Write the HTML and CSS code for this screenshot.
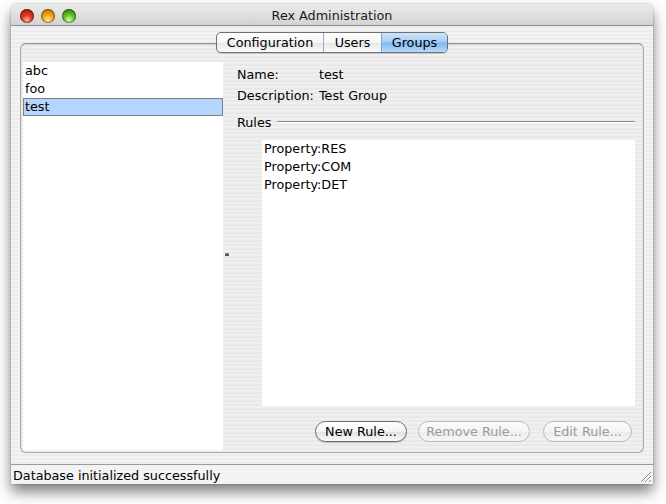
FILE: index.html
```html
<!DOCTYPE html>
<html>
<head>
<meta charset="utf-8">
<link rel="stylesheet" href="styles.css">
</head>
<body>
<div class="window">
  <div class="titlebar">
    <div class="lights">
      <span class="light red"></span>
      <span class="light amber"></span>
      <span class="light green"></span>
    </div>
    <div class="title">Rex Administration</div>
  </div>
  <div class="content">
    <div class="tabs">
      <div class="seg seg-config">Configuration</div>
      <div class="seg seg-users">Users</div>
      <div class="seg seg-groups active">Groups</div>
    </div>
    <div class="pane">
      <div class="groups-list">
        <div class="item">abc</div>
        <div class="item">foo</div>
        <div class="item selected">test</div>
      </div>
      <div class="divider"><span class="grip"></span></div>
      <div class="detail">
        <div class="field"><span class="label">Name:</span><span class="value">test</span></div>
        <div class="field field-desc"><span class="label">Description:</span><span class="value">Test Group</span></div>
        <div class="rules-head"><span>Rules</span><span class="rule-line"></span></div>
        <div class="rules-list">
          <div class="rule">Property:RES</div>
          <div class="rule">Property:COM</div>
          <div class="rule">Property:DET</div>
        </div>
        <div class="buttons">
          <button class="btn btn-default">New Rule...</button>
          <button class="btn btn-disabled btn-remove">Remove Rule...</button>
          <button class="btn btn-disabled btn-edit">Edit Rule...</button>
        </div>
      </div>
    </div>
  </div>
  <div class="statusbar">
    <span class="status-text">Database initialized successfully</span>
    <svg class="resize" width="14" height="14" viewBox="0 0 14 14">
      <path d="M13 3 L3 13 M13 7 L7 13 M13 11 L11 13" stroke="#8a8a8a" stroke-width="1" fill="none"/>
      <path d="M13 4 L4 13 M13 8 L8 13 M13 12 L12 13" stroke="#ffffff" stroke-width="1" fill="none"/>
    </svg>
  </div>
</div>
</body>
</html>
```

FILE: styles.css
```css
* { box-sizing: border-box; }
html, body { margin: 0; padding: 0; background: #ffffff; }
body {
  font-family: "DejaVu Sans", "Liberation Sans", sans-serif;
  font-size: 12.75px;
  color: #000;
  min-height: 504px;
  padding-top: 4px;
}
.window {
  margin: 0 0 20px 11px;
  width: 642px;
  height: 480px;
  border-radius: 5px 5px 0 0;
  box-shadow: 0 8px 14px rgba(0,0,0,0.5), 0 0 2px rgba(0,0,0,0.35);
  overflow: hidden;
  display: flex;
  flex-direction: column;
  background: #ededed;
}
.titlebar {
  height: 22px;
  flex: none;
  background: linear-gradient(#ebebeb, #d3d3d3);
  border-bottom: 1px solid #8f8f8f;
  position: relative;
  display: flex;
  align-items: center;
  justify-content: center;
}
.lights {
  position: absolute;
  left: 9px;
  top: 5px;
  display: flex;
  gap: 7px;
}
.light {
  width: 14px;
  height: 14px;
  border-radius: 50%;
  display: block;
  box-shadow: inset 0 0 0 1px rgba(0,0,0,0.35);
}
.red { background: radial-gradient(circle at 50% 78%, #ffb0a0 0, #e0402c 35%, #a00e04 90%); }
.amber { background: radial-gradient(circle at 50% 78%, #ffe9a0 0, #f2a51c 40%, #b46a00 90%); }
.green { background: radial-gradient(circle at 50% 78%, #d8ffb0 0, #66c02c 40%, #2b7a06 90%); }
.title {
  font-size: 12.75px;
  color: #1a1a1a;
  margin-top: 1px;
}
.content {
  flex: none;
  height: 438px;
  background: repeating-linear-gradient(#ececec 0, #ececec 2px, #f3f3f3 2px, #f3f3f3 4px);
  padding: 6px 9px 0 9px;
}
.tabs {
  position: relative;
  z-index: 1;
  margin: 0 auto -10px auto;
  width: 232px;
  height: 21px;
  display: flex;
  border: 1px solid #6f6f6f;
  border-radius: 5px;
  background: linear-gradient(#ffffff 0, #f6f6f6 50%, #e6e6e6 52%, #fbfbfb 100%);
  box-shadow: 0 1px 1px rgba(0,0,0,0.15);
  overflow: hidden;
}
.seg {
  display: flex;
  align-items: center;
  justify-content: center;
  height: 100%;
  font-size: 12.75px;
}
.seg-config { width: 107px; border-right: 1px solid #a9a9a9; }
.seg-users { width: 58px; border-right: 1px solid #7ea6d4; }
.seg-groups { flex: 1; }
.active {
  background: linear-gradient(#cfe4fb 0, #a5cdf6 48%, #7db7f0 52%, #b8dafb 100%);
}
.pane {
  height: 410px;
  border: 1px solid #a9a9a9;
  border-top-color: #8d8d8d;
  border-radius: 6px;
  padding: 18px 0 2px 2px;
  display: flex;
  background: repeating-linear-gradient(#e9e9e9 0, #e9e9e9 2px, #f0f0f0 2px, #f0f0f0 4px);
  box-shadow: inset 0 1px 2px rgba(0,0,0,0.08);
}
.groups-list {
  width: 200px;
  background: #ffffff;
  flex: none;
}
.item {
  height: 18px;
  line-height: 18px;
  padding-left: 2px;
}
.item.selected {
  background: #b5d5ff;
  border: 1px solid #808080;
  line-height: 16px;
  padding-left: 1px;
}
.divider {
  width: 7px;
  flex: none;
  display: flex;
  align-items: center;
  justify-content: center;
}
.grip {
  width: 4px;
  height: 3px;
  background: #555;
  border-radius: 2px 2px 0 0;
  margin-top: -4px;
}
.detail {
  flex: 1;
  display: flex;
  flex-direction: column;
  padding: 4px 8px 8px 7px;
}
.field {
  height: 18px;
  line-height: 18px;
  display: flex;
}
.field-desc { margin-top: 3px; }
.label { width: 82px; flex: none; }
.rules-head {
  margin-top: 8px;
  height: 18px;
  display: flex;
  align-items: center;
  gap: 6px;
}
.rule-line {
  flex: 1;
  height: 1px;
  background: #8a8a8a;
  border-bottom: 1px solid #fafafa;
  box-sizing: content-box;
}
.rules-list {
  margin: 9px 0 0 25px;
  flex: 1;
  background: #ffffff;
}
.rule {
  height: 18px;
  line-height: 18px;
  padding-left: 2px;
}
.buttons {
  margin-top: 15px;
  height: 21px;
  display: flex;
  justify-content: flex-end;
  padding-right: 3px;
}
.btn {
  font-family: "DejaVu Sans", "Liberation Sans", sans-serif;
  font-size: 12.75px;
  height: 21px;
  border-radius: 11px;
  padding: 0;
  display: flex;
  align-items: center;
  justify-content: center;
  border: 1px solid #6a6a6a;
  background: linear-gradient(#ffffff 0, #f4f4f4 50%, #e2e2e2 52%, #fafafa 100%);
  color: #000;
  box-shadow: 0 1px 1px rgba(0,0,0,0.2);
}
.btn-default { width: 92px; }
.btn-remove { width: 112px; margin-left: 11px; }
.btn-edit { width: 89px; margin-left: 13px; }
.btn-disabled {
  border-color: #b9b9b9;
  color: #9a9a9a;
  background: linear-gradient(#fbfbfb 0, #f4f4f4 50%, #ececec 52%, #f7f7f7 100%);
  box-shadow: none;
}
.statusbar {
  flex: 1;
  border-top: 1px solid #9a9a9a;
  background: #f3f3f3;
  display: flex;
  align-items: center;
  padding-left: 2px;
  position: relative;
}
.status-text { font-size: 12.75px; margin-top: 1px; }
.resize {
  position: absolute;
  right: 1px;
  bottom: 1px;
}
```
